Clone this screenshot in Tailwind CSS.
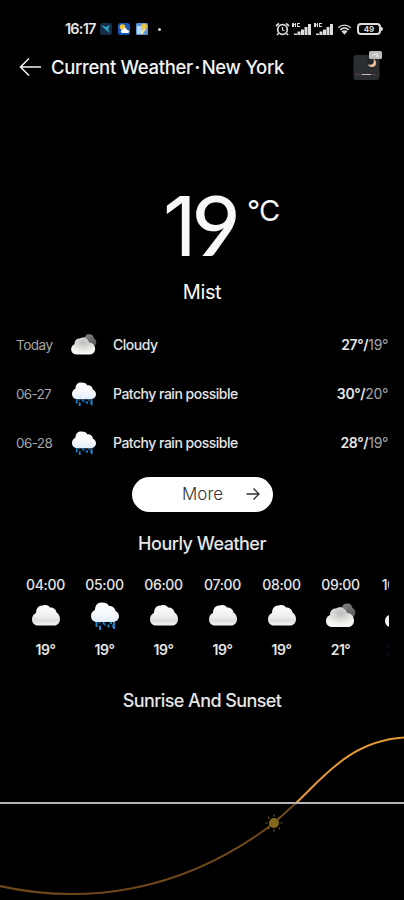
<!DOCTYPE html>
<html lang="en">
<head>
    <meta charset="UTF-8">
    <meta name="viewport" content="width=device-width, initial-scale=1.0">
    <title>Current Weather</title>
    <script src="https://cdn.jsdelivr.net/npm/@tailwindcss/browser@4"></script>
</head>
<body class="bg-black text-[#e6e6e6] font-['Inter',sans-serif] w-[404px] h-[900px] overflow-hidden">
    <!-- Shared icons -->
    <svg class="absolute w-0 h-0">
        <defs>
            <linearGradient id="white-cloud" x1="0" y1="0" x2="0" y2="1">
                <stop offset="0" stop-color="#ffffff"/>
                <stop offset="0.6" stop-color="#ededed"/>
                <stop offset="0.75" stop-color="#dddddd"/>
                <stop offset="1" stop-color="#f4f4f4"/>
            </linearGradient>
            <linearGradient id="rain-cloud" x1="0" y1="0" x2="0" y2="1">
                <stop offset="0" stop-color="#ffffff"/>
                <stop offset="0.65" stop-color="#f4f6fa"/>
                <stop offset="1" stop-color="#dfeefb"/>
            </linearGradient>
            <radialGradient id="front-cloud" cx="0.52" cy="0.3" r="0.6">
                <stop offset="0" stop-color="#bdbdbb"/>
                <stop offset="1" stop-color="#f6f6f3"/>
            </radialGradient>
            <linearGradient id="back-cloud" x1="0" y1="0" x2="1" y2="1">
                <stop offset="0" stop-color="#8a8a8a"/>
                <stop offset="1" stop-color="#555555"/>
            </linearGradient>
        </defs>
        <symbol id="cloud" viewBox="0 0 32 28">
            <path d="M8 23.500C4.500 23.500 2 21 2 17.500C2 14.500 3.500 12 6 11C6 6 9 3 13 3.500C16 2.500 19 3.500 20 5.500C23.500 5 26 7.500 26.500 10.500C29 12 30 14.500 30 17C30 21 27.500 23.500 24 23.500Z" fill="url(#white-cloud)"/>
        </symbol>
        <symbol id="rain" viewBox="0 0 32 28">
            <path d="M8 20C4.500 20 2 17.500 2 14C2 11 3.500 9 6 8C6 3 9 0 13 0.500C17 0.500 19 2 20 4C23.500 3.500 26 6 26.500 9C29 10 30 12 30 14.500C30 17.500 27 20 24 20Z" fill="url(#rain-cloud)"/>
            <path d="M7.500 20V25M11 23.500V28M14.500 20V22.500M19.500 22.500V25.500M22 20V22M25 20V27" stroke="#2384cc" stroke-width="2"/>
            <path d="M10.500 20V22M16 21V24M23.500 22.500V25.500" stroke="#1762a0" stroke-width="1.500"/>
        </symbol>
        <symbol id="cloudy" viewBox="0 0 32 28">
            <path d="M13 14C12 8 14 5 17 5C18 2 20 1.500 22 1.500C25 1 27 3 27.500 6C30 7 31 10 30 12.500C29.500 15 27 16 24 16Z" fill="url(#back-cloud)"/>
            <path d="M7 25C3.500 25 1 22.500 1 19C1 16 2.500 14 5 13C5 8.500 8 6 11 6.500C15 3.500 20.500 6 22 11C26 11 29 14.500 29 18.500C29 22.500 26.500 25 23 25Z" fill="url(#front-cloud)"/>
        </symbol>
    </svg>

    <!-- Status bar -->
    <div class="h-[58px] pl-[65px] pr-[21px] flex items-center justify-between">
        <div class="flex items-center">
            <span class="w-[35px] text-[14.500px] font-semibold tracking-[-0.800px] leading-none">16:17</span>
            <svg class="w-3 h-3" viewBox="0 0 12 12"><rect width="12" height="12" rx="2" fill="#172c48"/><path d="M1 2L6 4L10 2L8 6L10 10L6 7Z" fill="#27a9c4"/></svg>
            <svg class="w-3 h-3 ml-1.5" viewBox="0 0 12 12"><rect width="12" height="12" rx="2.500" fill="#1855b4"/><circle cx="4.500" cy="4" r="2.800" fill="#f4c83a"/><path d="M4 10C2 9 3 6 5 6.500C6 4 9 5 9 7C12 7 11.500 10 10 10Z" fill="#fff"/></svg>
            <svg class="w-3 h-3 ml-1.5" viewBox="0 0 12 12"><rect width="12" height="12" rx="1.500" fill="#5c95d8"/><path d="M1 3H6V11H1Z" fill="#b6d9f3"/><circle cx="8" cy="3.500" r="3" fill="#efc644"/><path d="M7 6H10L6 12L5 9Z" fill="#f5e3a0"/></svg>
            <span class="ml-[10px] size-[3px] rounded-full bg-gray-300"></span>
        </div>
        <div class="flex items-center text-[#dcdcdc]">
            <svg class="w-[15px] h-[14px]" viewBox="0 0 15 14" fill="none" stroke="currentColor"><circle cx="7.500" cy="7.500" r="4.800" stroke-width="1.700"/><path d="M7.500 5V8L9.500 8.500" stroke-width="1.200"/><path d="M1 4L4 1.300M14 4L11 1.300M3.500 11.500L2 13M11.500 11.500L13 13" stroke-width="1.700"/></svg>
            <svg class="w-5 h-[14px] ml-[2px]" viewBox="0 0 20 14" fill="currentColor"><path d="M0 1H2V2.200H3V1H4V5H3V3.300H2V5H0ZM5 1H8V2H6V4H8V5H5Z"/><path d="M2 11.500H5V13H2ZM5.500 9.500H8.500V13H5.500ZM9 7.500H12V13H9ZM12.500 5H15.500V13H12.500ZM16 2H19V13H16Z"/></svg>
            <svg class="w-5 h-[14px] ml-0.5" viewBox="0 0 20 14" fill="currentColor"><path d="M0 1H2V2.200H3V1H4V5H3V3.300H2V5H0ZM5 1H8V2H6V4H8V5H5Z"/><path d="M2 11.500H5V13H2ZM5.500 9.500H8.500V13H5.500ZM9 7.500H12V13H9ZM12.500 5H15.500V13H12.500ZM16 2H19V13H16Z"/></svg>
            <svg class="w-[15px] h-[13px] ml-[3px]" viewBox="0 0 17 14" fill="none" stroke="currentColor"><path d="M1.500 5C5.500 1 11.500 1 15.500 5" stroke-width="1.500"/><path d="M3.800 7.500C6.500 4.800 10.500 4.800 13.200 7.500" stroke-width="2"/><path d="M5 9C7 7.300 10 7.300 12 9L8.500 13Z" fill="currentColor" stroke="none"/></svg>
            <div class="ml-[5px] w-6 h-3 border-2 border-current rounded-[4px] flex items-center justify-center text-[8px] leading-[8px] font-bold">49</div>
            <div class="w-[2px] h-1 bg-current rounded-r"></div>
        </div>
    </div>

    <!-- Header -->
    <header class="h-[18px] pl-[19px] pr-[22px] flex items-center text-[#f2f2f2]">
        <svg class="w-[23px] h-[18px] shrink-0" viewBox="0 0 23 18" fill="none" stroke="currentColor" stroke-width="1.500"><path d="M22 9H1.500M10 0.500L1.500 9L10 17.500"/></svg>
        <h1 class="ml-[9px] pt-0.5 text-[18.500px] font-medium tracking-[-0.330px] whitespace-nowrap">Current Weather<span class="mx-[1.500px] font-bold">·</span>New York</h1>
        <svg class="ml-auto w-[29px] h-[31px] shrink-0 -mt-1" viewBox="0 0 29 31"><rect x="0.500" y="5" width="26" height="25" rx="3" fill="#2b2e31"/><circle cx="19" cy="13" r="4" fill="#efc09a"/><circle cx="17" cy="11" r="3.800" fill="#25282b"/><path d="M2 24.500H23" stroke="#6d3c44"/><path d="M9 24.500H18" stroke="#c5b9bb"/><rect x="16" y="1" width="13" height="8" rx="1.500" fill="#bcbcbc"/><path d="M19 6L21 4H25M23 6H26" stroke="#f4f4f4" fill="none"/></svg>
    </header>

    <!-- Current temperature -->
    <section class="h-[235px] pt-[110px] flex flex-col items-center text-[#f8f8f8]">
        <div class="w-[404px] h-20 flex items-start pl-[163px]">
            <span class="w-[29px] text-[83px] leading-[80px] font-normal">1</span>
            <span class="w-[49px] -mt-[2px] text-[84px] leading-[80px] font-['Lato',sans-serif] font-medium">9</span>
            <span class="ml-[6px] mt-[9px] text-[29px] leading-[32px] tracking-[-1px]">°C</span>
        </div>
        <p class="mt-[14px] text-xl leading-6 tracking-[-0.400px]">Mist</p>
    </section>

    <!-- Forecast -->
    <section class="mt-[9px] px-4 text-[14px] tracking-[-0.350px]">
        <div class="h-[49px] flex items-center">
            <span class="w-[54px] pt-0.5 text-[13.500px] tracking-[-0.500px] text-[#a6a6a6]">Today</span>
            <svg class="w-7 h-6"><use href="#cloudy"/></svg>
            <span class="ml-[15px] font-medium tracking-[-0.500px]">Cloudy</span>
            <span class="ml-auto font-semibold">27°/<span class="font-normal text-[#a6a6a6]">19°</span></span>
        </div>
        <div class="h-[49px] flex items-center">
            <span class="w-[54px] pt-0.5 text-[13.500px] tracking-[-0.700px] text-[#a6a6a6]">06-27</span>
            <svg class="w-7 h-6"><use href="#rain"/></svg>
            <span class="ml-[15px] font-medium tracking-[-0.500px]">Patchy rain possible</span>
            <span class="ml-auto font-semibold">30°/<span class="font-normal text-[#a6a6a6]">20°</span></span>
        </div>
        <div class="h-[49px] flex items-center">
            <span class="w-[54px] pt-0.5 text-[13.500px] tracking-[-0.600px] text-[#a6a6a6]">06-28</span>
            <svg class="w-7 h-6"><use href="#rain"/></svg>
            <span class="ml-[15px] font-medium tracking-[-0.500px]">Patchy rain possible</span>
            <span class="ml-auto font-semibold">28°/<span class="font-normal text-[#a6a6a6]">19°</span></span>
        </div>
    </section>

    <button class="mt-[10px] ml-[132px] w-[141px] h-[35px] rounded-full bg-white text-[#333] flex items-center">
        <span class="ml-[50px] w-[64px] text-left text-[17px] font-light">More</span>
        <svg class="w-[14px] h-[14px] -mt-px" viewBox="0 0 14 14" fill="none" stroke="currentColor" stroke-width="1.300"><path d="M0.500 7H13M7.500 1.500L13 7L7.500 12.500"/></svg>
    </button>

    <!-- Hourly -->
    <h2 class="mt-[20px] text-center text-[18px] leading-6 font-medium tracking-[-0.500px]">Hourly Weather</h2>
    <section class="mt-[19px] ml-4 w-[373px] h-[86px] flex overflow-hidden text-[14px]">
        <div class="w-[59px] shrink-0 flex flex-col items-center">
            <span class="leading-5 font-medium tracking-[-0.300px]">04:00</span>
            <svg class="mt-[7px] w-8 h-7"><use href="#cloud"/></svg>
            <span class="mt-[10px] leading-5 font-semibold tracking-[-0.500px]">19°</span>
        </div>
        <div class="w-[59px] shrink-0 flex flex-col items-center">
            <span class="leading-5 font-medium tracking-[-0.300px]">05:00</span>
            <svg class="mt-[7px] w-8 h-7"><use href="#rain"/></svg>
            <span class="mt-[10px] leading-5 font-semibold tracking-[-0.500px]">19°</span>
        </div>
        <div class="w-[59px] shrink-0 flex flex-col items-center">
            <span class="leading-5 font-medium tracking-[-0.300px]">06:00</span>
            <svg class="mt-[7px] w-8 h-7"><use href="#cloud"/></svg>
            <span class="mt-[10px] leading-5 font-semibold tracking-[-0.500px]">19°</span>
        </div>
        <div class="w-[59px] shrink-0 flex flex-col items-center">
            <span class="leading-5 font-medium tracking-[-0.300px]">07:00</span>
            <svg class="mt-[7px] w-8 h-7"><use href="#cloud"/></svg>
            <span class="mt-[10px] leading-5 font-semibold tracking-[-0.500px]">19°</span>
        </div>
        <div class="w-[59px] shrink-0 flex flex-col items-center">
            <span class="leading-5 font-medium tracking-[-0.300px]">08:00</span>
            <svg class="mt-[7px] w-8 h-7"><use href="#cloud"/></svg>
            <span class="mt-[10px] leading-5 font-semibold tracking-[-0.500px]">19°</span>
        </div>
        <div class="w-[59px] shrink-0 flex flex-col items-center">
            <span class="leading-5 font-medium tracking-[-0.300px]">09:00</span>
            <svg class="mt-[7px] w-8 h-7"><use href="#cloudy"/></svg>
            <span class="mt-[10px] leading-5 font-semibold tracking-[-0.500px]">21°</span>
        </div>
        <div class="w-[59px] shrink-0 flex flex-col items-center">
            <span class="leading-5 font-medium tracking-[-0.300px]">10:00</span>
            <svg class="mt-[7px] w-8 h-7"><use href="#cloudy"/></svg>
            <span class="mt-[10px] leading-5 font-semibold tracking-[-0.100px] text-[#666]">23°</span>
        </div>
    </section>

    <!-- Sunrise and sunset -->
    <h2 class="mt-[28px] text-center text-[18px] leading-6 font-medium tracking-[-0.600px]">Sunrise And Sunset</h2>
    <svg class="block w-[404px] h-[187px]" viewBox="0 713 404 187" fill="none">
        <path d="M-5 885C80 905 180 895 274 823L296 803" stroke="#6e481b" stroke-width="2"/>
        <path d="M296 803C322 779 350 740 406 737.500" stroke="#e39a35" stroke-width="2"/>
        <path d="M0 803H404" stroke="#b9b3b7" stroke-width="2"/>
        <circle cx="274" cy="823" r="5" fill="#85691a"/>
        <path d="M274 814.500V816.500M274 829.500V831.500M265.500 823H267.500M280.500 823H282.500M268 817L269.400 818.400M278.600 827.600L280 829M280 817L278.600 818.400M268 829L269.400 827.600" stroke="#75601a" stroke-width="1.200"/>
    </svg>
</body>
</html>
